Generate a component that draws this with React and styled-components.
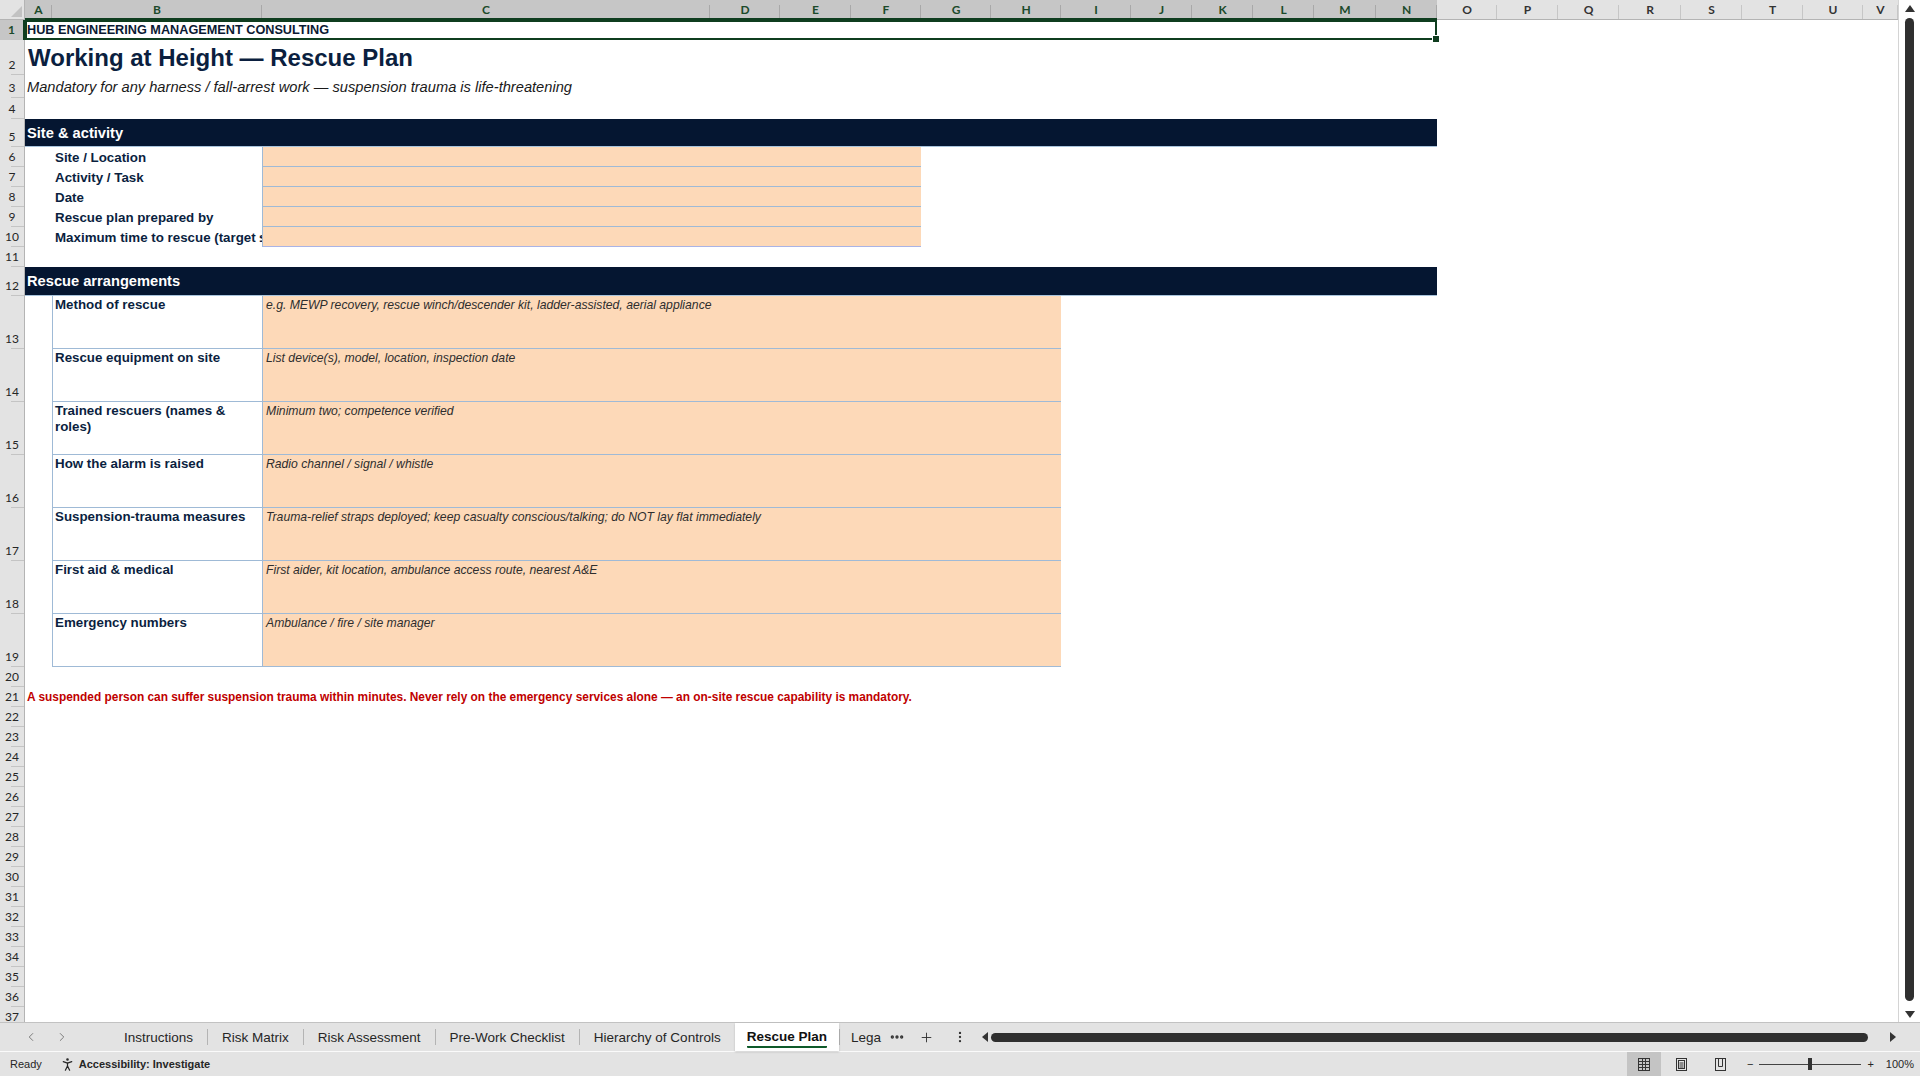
import React from 'react';
import styled, { createGlobalStyle } from 'styled-components';
import { ChevronLeft, ChevronRight, Plus, EllipsisVertical, Ellipsis, PersonStanding } from 'lucide-react';

const COLS = [
  ['A', 27], ['B', 210], ['C', 448], ['D', 70], ['E', 71], ['F', 70], ['G', 70], ['H', 70],
  ['I', 70], ['J', 61], ['K', 61], ['L', 61], ['M', 62], ['N', 61], ['O', 60], ['P', 61],
  ['Q', 61], ['R', 62], ['S', 61], ['T', 61], ['U', 60], ['V', 35],
];

// row heights for sheet rows 1..37
const ROWS = [20, 35, 23, 21, 28, 20, 20, 20, 20, 20, 20, 29, 53, 53, 53, 53, 53, 53, 53, 20, 20,
  ...Array(16).fill(20)];

const SITE_FIELDS = ['Site / Location', 'Activity / Task', 'Date', 'Rescue plan prepared by', 'Maximum time to rescue (target ≤ 15 min)'];

const ARRANGEMENTS = [
  ['Method of rescue', 'e.g. MEWP recovery, rescue winch/descender kit, ladder-assisted, aerial appliance'],
  ['Rescue equipment on site', 'List device(s), model, location, inspection date'],
  ['Trained rescuers (names & roles)', 'Minimum two; competence verified'],
  ['How the alarm is raised', 'Radio channel / signal / whistle'],
  ['Suspension-trauma measures', 'Trauma-relief straps deployed; keep casualty conscious/talking; do NOT lay flat immediately'],
  ['First aid & medical', 'First aider, kit location, ambulance access route, nearest A&E'],
  ['Emergency numbers', 'Ambulance / fire / site manager'],
];

const TABS = ['Instructions', 'Risk Matrix', 'Risk Assessment', 'Pre-Work Checklist', 'Hierarchy of Controls', 'Rescue Plan'];

const PEACH = '#fdd9b8';
const LINE = '#9fbad6';
const NAVY = '#0b1f3f';

const GlobalStyle = createGlobalStyle`
  html, body { margin: 0; padding: 0; background: #fff; overflow: hidden; }
  body { font-family: "Liberation Sans", Arial, sans-serif; }
`;

const Window = styled.div`
  width: 1920px;
  height: 1076px;
  display: flex;
  flex-direction: column;
  background: #fff;
  overflow: hidden;
`;

const Workspace = styled.div`
  display: flex;
  height: 1022px;
  flex: none;
`;

const Sheet = styled.div`
  display: grid;
  grid-template-columns: 25px ${COLS.map(c => c[1] + 'px').join(' ')};
  grid-template-rows: 20px ${ROWS.map(h => h + 'px').join(' ')};
  align-content: start;
  width: 1898px;
  height: 1022px;
  overflow: hidden;
  font-family: "Liberation Sans", Arial, sans-serif;
`;

const Corner = styled.div`
  grid-row: 1;
  grid-column: 1;
  background: #e3e3e3;
  border-right: 1px solid #b4b4b4;
  border-bottom: 1px solid #b4b4b4;
  position: relative;
  &::after {
    content: '';
    position: absolute;
    right: 2px;
    bottom: 2px;
    border-left: 11px solid transparent;
    border-bottom: 11px solid #c2c2c2;
  }
`;

const ColHead = styled.div`
  grid-row: 1;
  grid-column: ${p => p.$col};
  display: flex;
  align-items: center;
  justify-content: center;
  background: ${p => (p.$sel ? '#c6c6c6' : '#e3e3e3')};
  color: ${p => (p.$sel ? '#1b4a2a' : '#333')};
  border-bottom: ${p => (p.$sel ? '2px solid #0f3d1f' : '1px solid #b4b4b4')};
  font: 700 12px Lato, "Liberation Sans", sans-serif;
  position: relative;
  &::after {
    content: '';
    position: absolute;
    right: 0;
    top: 5px;
    bottom: 0;
    width: 1px;
    background: ${p => (p.$sel ? '#a8a8a8' : '#c6c6c6')};
  }
`;

const RowHead = styled.div`
  grid-column: 1;
  grid-row: ${p => p.$row};
  display: flex;
  align-items: flex-end;
  justify-content: center;
  padding-bottom: 3px;
  box-sizing: border-box;
  background: ${p => (p.$sel ? '#c6c6c6' : '#e3e3e3')};
  color: ${p => (p.$sel ? '#1b4a2a' : '#262626')};
  border-right: ${p => (p.$sel ? '2px solid #0f3d1f' : '1px solid #b4b4b4')};
  font: ${p => (p.$sel ? 700 : 400)} 12px/14px Lato, "Liberation Sans", sans-serif;
  position: relative;
  &::after {
    content: '';
    position: absolute;
    left: 11px;
    right: 0;
    bottom: 0;
    height: 1px;
    background: #c4c4c4;
  }
`;

const Cell = styled.div`
  grid-row: ${p => p.$row};
  grid-column: ${p => p.$col} / span ${p => p.$span || 1};
  min-width: 0;
  display: flex;
  white-space: nowrap;
  box-sizing: border-box;
`;

const Banner = styled(Cell)`
  align-items: center;
  padding-left: 2px;
  font-size: 12.7px;
  font-weight: 700;
  color: #0b1a33;
  box-shadow: inset 0 0 0 2px #0f3d1f;
  position: relative;
  &::after {
    content: '';
    position: absolute;
    right: -3px;
    bottom: -3px;
    width: 6px;
    height: 6px;
    background: #0f3d1f;
    border: 1px solid #fff;
  }
`;

const Title = styled(Cell)`
  align-items: flex-end;
  padding: 0 0 3px 3px;
  font-size: 24px;
  line-height: 28px;
  font-weight: 700;
  color: ${NAVY};
`;

const Subtitle = styled(Cell)`
  align-items: flex-end;
  padding: 0 0 2px 2px;
  font-size: 14.67px;
  line-height: 17px;
  font-style: italic;
  color: #1a1a1a;
`;

const Band = styled(Cell)`
  align-items: center;
  padding-left: 2px;
  background: #051631;
  color: #fff;
  font-size: 14.67px;
  font-weight: 700;
  border-bottom: 1px solid #a9c4dc;
`;

const FormLabel = styled(Cell)`
  align-items: center;
  padding-left: 3px;
  overflow: hidden;
  font-size: 13.33px;
  font-weight: 700;
  color: ${NAVY};
`;

const FormField = styled(Cell)`
  background: ${PEACH};
  border-left: 1px solid ${LINE};
  border-bottom: 1px solid ${p => (p.$last ? '#a9b4e6' : LINE)};
`;

const PlanLabel = styled(Cell)`
  display: block;
  white-space: normal;
  padding: 1px 6px 0 2px;
  background: #fff;
  border-left: 1px solid ${LINE};
  border-bottom: 1px solid ${LINE};
  font-size: 13.33px;
  line-height: 16px;
  font-weight: 700;
  color: ${NAVY};
`;

const PlanField = styled(Cell)`
  display: block;
  padding: 1px 3px 0;
  background: ${PEACH};
  border-left: 1px solid ${LINE};
  border-bottom: 1px solid ${LINE};
  font-size: 12.2px;
  line-height: 16px;
  font-style: italic;
  color: #2e2e2e;
`;

const Warning = styled(Cell)`
  align-items: center;
  padding-left: 2px;
  font-size: 11.9px;
  font-weight: 700;
  color: #c00000;
`;

const VScroll = styled.div`
  width: 22px;
  flex: none;
  display: flex;
  flex-direction: column;
  align-items: center;
  padding: 5px 0 4px;
  box-sizing: border-box;
  background: #fff;
  border-left: 1px solid #d4d4d4;
`;

const Arrow = styled.div`
  width: 0;
  height: 0;
  flex: none;
  ${p => p.$dir === 'up' && `border-left: 5px solid transparent; border-right: 5px solid transparent; border-bottom: 7px solid #333;`}
  ${p => p.$dir === 'down' && `border-left: 5px solid transparent; border-right: 5px solid transparent; border-top: 7px solid #333;`}
  ${p => p.$dir === 'left' && `border-top: 5px solid transparent; border-bottom: 5px solid transparent; border-right: 6px solid #333;`}
  ${p => p.$dir === 'right' && `border-top: 5px solid transparent; border-bottom: 5px solid transparent; border-left: 6px solid #333;`}
`;

const VThumb = styled.div`
  flex: 1;
  width: 9px;
  margin: 6px 0 10px;
  border-radius: 5px;
  background: #2f2f2f;
`;

const TabBar = styled.div`
  height: 29px;
  flex: none;
  display: flex;
  align-items: stretch;
  box-sizing: border-box;
  background: #e3e3e3;
  border-top: 1px solid #c2c2c2;
  font-family: "Liberation Sans", Arial, sans-serif;
  font-size: 13.5px;
  color: #262626;
`;

const NavGroup = styled.div`
  display: flex;
  align-items: center;
  gap: 17px;
  width: 110px;
  padding-left: 24px;
  box-sizing: border-box;
  color: #6e6e6e;
  flex: none;
`;

const Tab = styled.div`
  display: flex;
  align-items: center;
  padding: 0 ${p => (p.$active ? 12 : 14)}px;
  flex: none;
  position: relative;
  background: ${p => (p.$active ? '#fff' : 'transparent')};
  font-weight: ${p => (p.$active ? 700 : 400)};
  color: ${p => (p.$active ? '#111' : '#262626')};
  box-shadow: ${p => (p.$active ? '0 1px 2px rgba(0,0,0,0.18)' : 'none')};
`;

const TabLabel = styled.span`
  padding: ${p => (p.$active ? '3px 0 2px' : '0')};
  border-bottom: ${p => (p.$active ? '2px solid #0f5a2a' : 'none')};
  border-radius: 1px;
`;

const TabSep = styled.div`
  width: 1px;
  height: 16px;
  align-self: center;
  background: #b4b4b4;
  flex: none;
`;

const IconBtn = styled.div`
  display: flex;
  align-items: center;
  justify-content: center;
  width: ${p => p.$w || 30}px;
  flex: none;
  color: #333;
`;

const HScroll = styled.div`
  flex: 1;
  display: flex;
  align-items: center;
  gap: 3px;
  padding: 0 24px 0 8px;
`;

const HThumb = styled.div`
  flex: 1;
  height: 9px;
  margin-right: 19px;
  border-radius: 5px;
  background: #2f2f2f;
`;

const StatusBar = styled.div`
  height: 25px;
  flex: none;
  display: flex;
  align-items: stretch;
  box-sizing: border-box;
  background: #e3e3e3;
  border-top: 1px solid #fafafa;
  font-family: "Liberation Sans", Arial, sans-serif;
  font-size: 11px;
  color: #262626;
`;

const StatusText = styled.div`
  display: flex;
  align-items: center;
  gap: 3px;
  padding-left: ${p => p.$pad || 0}px;
  font-weight: ${p => (p.$bold ? 700 : 400)};
`;

const Spacer = styled.div`
  flex: 1;
`;

const ViewBtn = styled.div`
  width: ${p => p.$w || 40}px;
  display: flex;
  align-items: center;
  justify-content: center;
  background: ${p => (p.$active ? '#c4c4c4' : 'transparent')};
  color: #333;
`;

const ZoomGroup = styled.div`
  display: flex;
  align-items: center;
  gap: 6px;
  padding: 0 6px 0 8px;
  font-size: 11px;
  color: #262626;
`;

const SliderTrack = styled.div`
  width: 102px;
  height: 1px;
  background: #444;
  display: flex;
  align-items: center;
  justify-content: center;
`;

const SliderKnob = styled.div`
  width: 4px;
  height: 12px;
  background: #333;
`;

const NormalIcon = () => (
  <svg width="14" height="15" viewBox="0 0 14 15" fill="none" stroke="#333" strokeWidth="1">
    <rect x="1.5" y="1.5" width="11" height="12" />
    <line x1="5.5" y1="1.5" x2="5.5" y2="13.5" />
    <line x1="8.5" y1="1.5" x2="8.5" y2="13.5" />
    <line x1="1.5" y1="4.5" x2="12.5" y2="4.5" />
    <line x1="1.5" y1="7.5" x2="12.5" y2="7.5" />
    <line x1="1.5" y1="10.5" x2="12.5" y2="10.5" />
  </svg>
);

const PageIcon = () => (
  <svg width="13" height="15" viewBox="0 0 13 15" fill="none" stroke="#333" strokeWidth="1">
    <rect x="1.5" y="1.5" width="10" height="12" />
    <rect x="3.5" y="3.5" width="6" height="8" />
    <line x1="4.5" y1="6" x2="8.5" y2="6" />
    <line x1="4.5" y1="8" x2="8.5" y2="8" />
    <line x1="4.5" y1="10" x2="8.5" y2="10" />
  </svg>
);

const BreakIcon = () => (
  <svg width="13" height="15" viewBox="0 0 13 15" fill="none" stroke="#333" strokeWidth="1">
    <rect x="1.5" y="1.5" width="10" height="12" />
    <polyline points="4.5,1.5 4.5,9.5 8.5,9.5 8.5,1.5" />
  </svg>
);

const App = () => {
  return (
    <>
      <GlobalStyle />
      <Window>
        <Workspace>
          <Sheet>
            <Corner />
            {COLS.map(([letter], i) => (
              <ColHead key={letter} $col={i + 2} $sel={i < 14}>{letter}</ColHead>
            ))}
            {ROWS.map((_, i) => (
              <RowHead key={i} $row={i + 2} $sel={i === 0}>{i + 1}</RowHead>
            ))}

            <Banner $row={2} $col={2} $span={14}>HUB ENGINEERING MANAGEMENT CONSULTING</Banner>
            <Title $row={3} $col={2} $span={14}>Working at Height — Rescue Plan</Title>
            <Subtitle $row={4} $col={2} $span={14}>
              Mandatory for any harness / fall-arrest work — suspension trauma is life-threatening
            </Subtitle>

            <Band $row={6} $col={2} $span={14}>Site &amp; activity</Band>
            {SITE_FIELDS.map((label, i) => (
              <React.Fragment key={label}>
                <FormLabel $row={7 + i} $col={3}>{label}</FormLabel>
                <FormField $row={7 + i} $col={4} $span={4} $last={i === SITE_FIELDS.length - 1} />
              </React.Fragment>
            ))}

            <Band $row={13} $col={2} $span={14}>Rescue arrangements</Band>
            {ARRANGEMENTS.map(([label, hint], i) => (
              <React.Fragment key={label}>
                <PlanLabel $row={14 + i} $col={3}>{label}</PlanLabel>
                <PlanField $row={14 + i} $col={4} $span={6}>{hint}</PlanField>
              </React.Fragment>
            ))}

            <Warning $row={22} $col={2} $span={21}>
              A suspended person can suffer suspension trauma within minutes. Never rely on the emergency services alone — an on-site rescue capability is mandatory.
            </Warning>
          </Sheet>
          <VScroll>
            <Arrow $dir="up" />
            <VThumb />
            <Arrow $dir="down" />
          </VScroll>
        </Workspace>

        <TabBar>
          <NavGroup>
            <ChevronLeft size={14} strokeWidth={1.5} />
            <ChevronRight size={14} strokeWidth={1.5} />
          </NavGroup>
          {TABS.map((name, i) => {
            const active = name === 'Rescue Plan';
            const next = TABS[i + 1];
            return (
              <React.Fragment key={name}>
                <Tab $active={active}><TabLabel $active={active}>{name}</TabLabel></Tab>
                {next && next !== 'Rescue Plan' && <TabSep />}
              </React.Fragment>
            );
          })}
          <TabSep />
          <Tab style={{ paddingRight: 5, paddingLeft: 11 }}>Lega</Tab>
          <IconBtn $w={22}><Ellipsis size={16} strokeWidth={3} /></IconBtn>
          <IconBtn $w={38}><Plus size={15} strokeWidth={1.5} /></IconBtn>
          <IconBtn $w={28}><EllipsisVertical size={14} strokeWidth={2} /></IconBtn>
          <HScroll>
            <Arrow $dir="left" />
            <HThumb />
            <Arrow $dir="right" />
          </HScroll>
        </TabBar>

        <StatusBar>
          <StatusText $pad={10}>Ready</StatusText>
          <StatusText $pad={17} $bold>
            <PersonStanding size={17} strokeWidth={1.7} />
            Accessibility: Investigate
          </StatusText>
          <Spacer />
          <ViewBtn $active $w={34}><NormalIcon /></ViewBtn>
          <ViewBtn $w={42}><PageIcon /></ViewBtn>
          <ViewBtn $w={36}><BreakIcon /></ViewBtn>
          <ZoomGroup>
            <span>−</span>
            <SliderTrack><SliderKnob /></SliderTrack>
            <span>+</span>
            <span style={{ marginLeft: 6 }}>100%</span>
          </ZoomGroup>
        </StatusBar>
      </Window>
    </>
  );
};

export default App;
